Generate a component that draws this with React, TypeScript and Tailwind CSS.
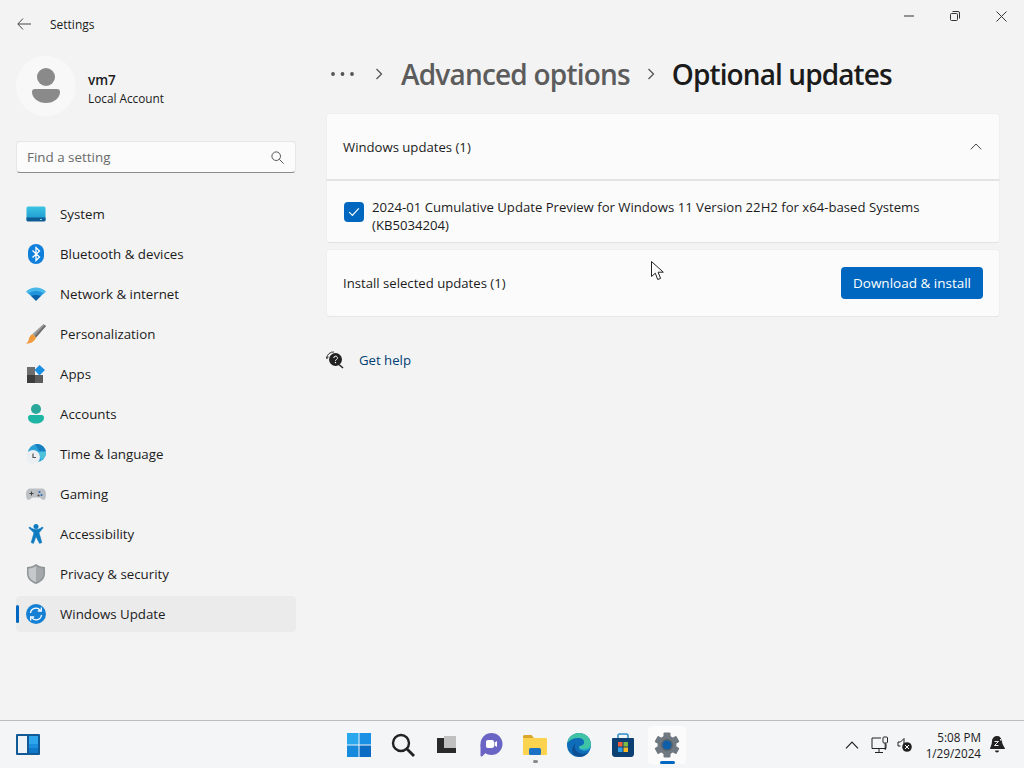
import type { ReactNode } from "react";

const font = { fontFamily: '"Open Sans", "Noto Sans", sans-serif' };

const SystemIcon = () => (
  <svg width="20" height="16" viewBox="0 0 20 16">
    <defs>
      <linearGradient id="sys" x1="0" y1="0" x2="0" y2="1">
        <stop offset="0" stopColor="#3cc4e4" />
        <stop offset="1" stopColor="#1a94cc" />
      </linearGradient>
    </defs>
    <rect x="0.5" y="0.5" width="19" height="14.5" rx="1.5" fill="url(#sys)" />
    <path d="M.5 11.5h19V14a1.5 1.5 0 0 1-1.5 1.5H2A1.5 1.5 0 0 1 .5 14z" fill="#0f5c94" />
    <rect x="14" y="13" width="2" height="1" fill="#8fd0ea" />
  </svg>
);

const BluetoothIcon = () => (
  <svg width="16" height="20" viewBox="0 0 16 20">
    <rect x="0" y="0" width="16" height="20" rx="8" fill="#0f7fdc" />
    <path d="M4.5 6.5l7 6.5-3.5 3.5V3.5L11.5 7l-7 6.5" fill="none" stroke="#fff" strokeWidth="1.3" />
  </svg>
);

const WifiIcon = () => (
  <svg width="20" height="14" viewBox="0 0 20 14">
    <path d="M0 4.5C5.500 -1 14.500 -1 20 4.500l-2.500 2.500H2.500z" fill="#48b8ea" />
    <path d="M2.500 6.500c4-3.500 11-3.500 15 0L15 9H5z" fill="#1f93dc" />
    <path d="M5 9c3-1.500 7-1.500 10 0l-5 5z" fill="#0c5fa8" />
  </svg>
);

const BrushIcon = () => (
  <svg width="20" height="20" viewBox="0 0 20 20">
    <path d="M17.500 0L20 2 10 13.500 6.500 10z" fill="#9a9a9a" />
    <path d="M20 2L10 13.500 8.500 12 18.500 1z" fill="#6e6e6e" />
    <path d="M6.500 10L10 13.500c-1 3.500-5 6.500-10 6 2.500-1.500 2.500-3 3-5 .5-2 2-4 3.500-4.500z" fill="#f09a3c" />
  </svg>
);

const AppsIcon = () => (
  <svg width="18" height="18" viewBox="0 0 18 18">
    <rect x="0" y="2" width="8" height="8" fill="#6e6e6e" />
    <rect x="0" y="10" width="8" height="8" fill="#3d3d3d" />
    <rect x="8" y="10" width="8" height="8" fill="#5c5c5c" />
    <path d="M12.500 0L18 5l-5.500 5.500L7.500 5z" fill="#1a8ee0" />
  </svg>
);

const AccountsIcon = () => (
  <svg width="16" height="20" viewBox="0 0 16 20">
    <circle cx="8" cy="5" r="5" fill="#2aa79b" />
    <path d="M0 13.500C0 12 1 11 2.500 11h11c1.500 0 2.500 1 2.500 2.500C16 17.500 12 19.500 8 19.500S0 17.500 0 13.500z" fill="#1eb5a4" />
  </svg>
);

const TimeIcon = () => (
  <svg width="20" height="20" viewBox="0 0 20 20">
    <circle cx="11" cy="9" r="9" fill="#2aa2d8" />
    <path d="M11 0a9 9 0 0 1 8.800 7H13l-4-7z" fill="#177fc0" />
    <path d="M13 8h7a9 9 0 0 1-5 8z" fill="#4fc3dc" />
    <circle cx="7" cy="13" r="7" fill="#eceff2" />
    <path d="M7 9.500V13.500H10" fill="none" stroke="#555" strokeWidth="1.200" />
  </svg>
);

const GamingIcon = () => (
  <svg width="20" height="13" viewBox="0 0 20 13">
    <path d="M4 0.500h12c2.500 0 4 2.500 4 6 0 3.500-1 5.500-2.500 5.500-2 0-2.500-2.500-4.500-2.500H7c-2 0-2.500 2.500-4.500 2.500C1 12 0 10 0 6.500 0 3 1.500.5 4 .5z" fill="#bcc0c4" />
    <path d="M3.500 5.500h4M5.500 3.500v4" stroke="#444" strokeWidth="1" />
    <circle cx="13.500" cy="4" r="1.100" fill="#2b6cb0" />
    <circle cx="15.500" cy="7" r="1.100" fill="#2b6cb0" />
    <circle cx="12.500" cy="7.500" r="1" fill="#444" />
  </svg>
);

const AccessibilityIcon = () => (
  <svg width="16" height="20" viewBox="0 0 16 20">
    <circle cx="8" cy="2.500" r="2.500" fill="#0f7ac0" />
    <path d="M.8 3.800l1-.8C4 4.800 6 5.500 8 5.500s4-.7 6.200-2.500l1 .8-4.200 5 2.800 9.700-2.200.9L8 12.500l-2.600 6.900-2.200-.9L6 8.800z" fill="#0f7ac0" stroke="#0f7ac0" strokeWidth=".6" />
  </svg>
);

const ShieldIcon = () => (
  <svg width="18" height="20" viewBox="0 0 18 20">
    <path d="M9 0c2.500 2 5.500 3 9 3v6.500c0 5-3.500 8.500-9 10.500-5.500-2-9-5.500-9-10.500V3c3.500 0 6.500-1 9-3z" fill="#8f9497" />
    <path d="M9 2c2 1.500 4.500 2.300 7.500 2.500v5c0 4-2.800 7-7.500 8.800z" fill="#a4a8ab" />
    <path d="M9 2C7 3.500 4.500 4.300 1.500 4.500v5c0 4 2.800 7 7.500 8.800z" fill="#c6c9cb" />
  </svg>
);

const UpdateIcon = () => (
  <svg width="20" height="20" viewBox="0 0 20 20">
    <circle cx="10" cy="10" r="10" fill="#1580d4" />
    <path d="M4.500 9a5.500 5.500 0 0 1 9.800-2.700M15.500 11a5.500 5.500 0 0 1-9.800 2.700" fill="none" stroke="#fff" strokeWidth="1.300" />
    <path d="M15.300 3.500v3.500h-3.500M4.700 16.500V13h3.500" fill="none" stroke="#fff" strokeWidth="1.300" />
  </svg>
);

const nav: { label: string; icon: ReactNode }[] = [
  { label: "System", icon: <SystemIcon /> },
  { label: "Bluetooth & devices", icon: <BluetoothIcon /> },
  { label: "Network & internet", icon: <WifiIcon /> },
  { label: "Personalization", icon: <BrushIcon /> },
  { label: "Apps", icon: <AppsIcon /> },
  { label: "Accounts", icon: <AccountsIcon /> },
  { label: "Time & language", icon: <TimeIcon /> },
  { label: "Gaming", icon: <GamingIcon /> },
  { label: "Accessibility", icon: <AccessibilityIcon /> },
  { label: "Privacy & security", icon: <ShieldIcon /> },
  { label: "Windows Update", icon: <UpdateIcon /> },
];

function TitleBar() {
  return (
    <div className="flex h-12 items-center">
      <svg className="ml-[17px]" width="14" height="12" viewBox="0 0 14 12">
        <path d="M6 .5L.8 6 6 11.500M1 6h13" fill="none" stroke="#444" strokeWidth="1" />
      </svg>
      <span className="mt-[2px] ml-[19px] text-[12px] text-[#1b1b1b]">Settings</span>
      <div className="ml-auto flex">
        <div className="flex h-8 w-[46px] -translate-y-2 items-center justify-center">
          <svg width="10" height="2" viewBox="0 0 10 2">
            <path d="M0 1h10" stroke="#333" strokeWidth="1" />
          </svg>
        </div>
        <div className="flex h-8 w-[46px] -translate-y-2 items-center justify-center">
          <svg width="10" height="10" viewBox="0 0 10 10">
            <rect x="0.500" y="2.500" width="7" height="7" rx="1" fill="none" stroke="#333" />
            <path d="M2.500 .5h5.500a1.500 1.500 0 0 1 1.500 1.500v5.500" fill="none" stroke="#333" />
          </svg>
        </div>
        <div className="flex h-8 w-[46px] -translate-y-2 items-center justify-center">
          <svg width="11" height="11" viewBox="0 0 11 11">
            <path d="M.5.500l10 10M10.500.5l-10 10" stroke="#333" strokeWidth="1" />
          </svg>
        </div>
      </div>
    </div>
  );
}

function Sidebar() {
  return (
    <div className="flex w-[326px] shrink-0 flex-col pl-4">
      <div className="mt-2 flex items-center">
        <div className="flex h-[60px] w-[60px] items-center justify-center rounded-full bg-[#f8f8f8]">
          <svg width="30" height="36" viewBox="0 0 30 36">
            <circle cx="15" cy="9" r="9" fill="#8a8a8a" />
            <path d="M1 24c0-2 1-3 3-3h22c2 0 3 1 3 3 0 6-6 11-14 11S1 30 1 24z" fill="#8a8a8a" />
          </svg>
        </div>
        <div className="mt-[6px] ml-3 flex flex-col">
          <span className="text-[13.500px] leading-[18px] font-semibold text-[#1b1b1b]">vm7</span>
          <span className="text-[11.800px] leading-[18px] text-[#1b1b1b]">Local Account</span>
        </div>
      </div>
      <div className="mt-[25px] flex h-8 w-[280px] items-center justify-between rounded border border-[#e6e6e6] border-b-[#8a8a8a] bg-[#fbfbfb] pr-[11px] pl-[10px]">
        <span className="text-[13.400px] text-[#6a6a6a]">Find a setting</span>
        <svg width="13" height="13" viewBox="0 0 13 13">
          <circle cx="5.200" cy="5.200" r="4.300" fill="none" stroke="#555" />
          <path d="M8.300 8.300l4.200 4.200" stroke="#555" />
        </svg>
      </div>
      <div className="mt-[23px] flex w-[280px] flex-col gap-1">
        {nav.map((item) => {
          const active = item.label === "Windows Update";
          return (
            <div key={item.label} className={`relative flex h-9 items-center rounded ${active ? "bg-[#ebebeb]" : ""}`}>
              {active && <div className="absolute top-[9px] left-0 h-[18px] w-[3px] rounded bg-[#0067c0]" />}
              <div className="ml-[10px] flex w-5 justify-center">{item.icon}</div>
              <span className="ml-[14px] pt-[2px] text-[13.300px] text-[#1b1b1b]">{item.label}</span>
            </div>
          );
        })}
      </div>
    </div>
  );
}

function Main() {
  return (
    <div className="flex w-[674px] flex-col">
      <div className="flex h-[52px] items-center">
        <svg className="ml-[5px]" width="24" height="4" viewBox="0 0 24 4">
          <circle cx="2" cy="2" r="1.900" fill="#555" />
          <circle cx="11.500" cy="2" r="1.900" fill="#555" />
          <circle cx="21" cy="2" r="1.900" fill="#555" />
        </svg>
        <svg className="ml-[20px]" width="8" height="12" viewBox="0 0 8 12">
          <path d="M1.500 1l5 5-5 5" fill="none" stroke="#555" strokeWidth="1.300" />
        </svg>
        <span className="ml-[18px] text-[28px] font-semibold tracking-[-0.8px] whitespace-nowrap text-[#5c5c5c]">Advanced options</span>
        <svg className="ml-[17px]" width="8" height="12" viewBox="0 0 8 12">
          <path d="M1.500 1l5 5-5 5" fill="none" stroke="#555" strokeWidth="1.300" />
        </svg>
        <span className="ml-[17px] text-[28px] font-semibold tracking-[-0.9px] whitespace-nowrap text-[#1b1b1b]">Optional updates</span>
      </div>
      <div className="mt-[13px] flex h-[68px] items-center justify-between rounded-t border border-[#efefef] border-b-2 border-b-[#e4e4e4] bg-[#fbfbfb] pr-[17px] pl-4">
        <span className="pt-[2px] text-[13.150px] text-[#1b1b1b]">Windows updates (1)</span>
        <svg width="12" height="7" viewBox="0 0 12 7">
          <path d="M.8 6.300L6 1l5.200 5.300" fill="none" stroke="#444" strokeWidth="1" />
        </svg>
      </div>
      <div className="flex h-[62px] items-center rounded-b border border-t-0 border-[#efefef] border-b-[#e2e2e2] bg-[#fbfbfb] pl-[17px]">
        <div className="flex h-5 w-5 shrink-0 items-center justify-center rounded bg-[#0067c0]">
          <svg width="12" height="10" viewBox="0 0 12 10">
            <path d="M1.200 5.200l3.200 3.200 6.400-7" fill="none" stroke="#fff" strokeWidth="1.200" />
          </svg>
        </div>
        <span className="mt-[8px] ml-2 w-[590px] text-[13.150px] leading-[18px] text-[#1b1b1b]">
          2024-01 Cumulative Update Preview for Windows 11 Version 22H2 for x64-based Systems (KB5034204)
        </span>
      </div>
      <div className="mt-[6px] flex h-[68px] items-center justify-between rounded border border-[#efefef] border-b-[#e6e6e6] bg-[#fbfbfb] pr-4 pl-4">
        <span className="pt-[2px] text-[13.150px] text-[#1b1b1b]">Install selected updates (1)</span>
        <div className="flex h-8 w-[142px] items-center justify-center rounded bg-[#0067c0] text-[13.500px] text-white">
          Download &amp; install
        </div>
      </div>
      <div className="mt-[33px] flex items-center">
        <svg width="18" height="18" viewBox="0 0 18 18">
          <path d="M.8 7.500A6.500 6.500 0 0 1 8 1" fill="none" stroke="#333" strokeWidth="1" />
          <path d="M.8 7.500l1.800-1.500M.8 7.500L0 5.500" fill="none" stroke="#333" strokeWidth="1" />
          <circle cx="9.500" cy="8.500" r="6.500" fill="#222" />
          <path d="M13 13.500l4 3.500" stroke="#222" strokeWidth="1.500" />
          <path d="M7.800 7a1.800 1.800 0 1 1 2.700 1.500c-.7.4-1 .7-1 1.300" fill="none" stroke="#fff" strokeWidth="1" />
          <circle cx="9.500" cy="11.500" r=".7" fill="#fff" />
        </svg>
        <span className="ml-[15px] pt-[1px] text-[13.200px] text-[#003e73]">Get help</span>
      </div>
    </div>
  );
}

function Taskbar() {
  const teeth = [0, 60, 120, 180, 240, 300];
  return (
    <div className="relative flex h-12 items-center border-t border-[#bdbdbd] bg-[#f4f5f6]">
      <svg className="ml-4" width="24" height="21" viewBox="0 0 24 21">
        <rect width="24" height="21" rx="1" fill="#125a96" />
        <rect x="2" y="2" width="9" height="17" fill="#eef3f7" />
        <rect x="13" y="2" width="9" height="17" fill="#2ea6ee" />
        <rect x="13" y="10" width="9" height="4" fill="#1a8fe0" />
        <rect x="13" y="14" width="9" height="5" fill="#0f78c8" />
      </svg>
      <div className="ml-[297px] flex items-center">
        <div className="flex w-11 justify-center">
          <svg width="24" height="24" viewBox="0 0 24 24">
            <rect x="0" y="0" width="11.500" height="11.500" fill="#29a8ee" />
            <rect x="12.500" y="0" width="11.500" height="11.500" fill="#1a90e4" />
            <rect x="0" y="12.500" width="11.500" height="11.500" fill="#168adc" />
            <rect x="12.500" y="12.500" width="11.500" height="11.500" fill="#0c6cc4" />
          </svg>
        </div>
        <div className="flex w-11 justify-center">
          <svg width="24" height="24" viewBox="0 0 24 24">
            <circle cx="10" cy="10" r="8" fill="none" stroke="#222" strokeWidth="2.400" />
            <path d="M16 16l7 7" stroke="#222" strokeWidth="2.800" />
          </svg>
        </div>
        <div className="flex w-11 justify-center">
          <svg width="20" height="17" viewBox="0 0 20 17">
            <rect x="7" y="0" width="12" height="12" fill="#c0c0c0" />
            <path d="M0 2h7v10h12v5H0z" fill="#2a2a2a" />
          </svg>
        </div>
        <div className="flex w-11 justify-center">
          <svg width="24" height="24" viewBox="0 0 24 24">
            <circle cx="12.500" cy="11" r="11" fill="#6a64c4" />
            <path d="M1.500 11v11c0 1.500 1 2 2 1l3-3z" fill="#6a64c4" />
            <rect x="7" y="7" width="8" height="8" rx="1.800" fill="#fff" />
            <path d="M15.500 9.500l2.500-1.500v6l-2.500-1.500z" fill="#fff" />
          </svg>
        </div>
        <div className="relative flex w-11 justify-center">
          <svg width="24" height="20" viewBox="0 0 24 20">
            <path d="M0 1.500C0 .7.700 0 1.500 0h7l2.500 3H0z" fill="#d9a62e" />
            <rect y="3" width="24" height="17" rx="1" fill="#fbd34e" />
            <rect x="6" y="13" width="12" height="7" rx="1.500" fill="#1b72c4" />
          </svg>
          <div className="absolute top-[25px] h-[3px] w-[5px] rounded-full bg-[#8a8a8a]" />
        </div>
        <div className="flex w-11 justify-center">
          <svg width="24" height="24" viewBox="0 0 24 24">
            <circle cx="12" cy="12" r="12" fill="#0f6cb8" />
            <path d="M.3 10C1.500 4 6.500 0 12 0c7 0 12 5 12 12 0 3.500-3 5.500-6.500 5.500-3 0-5.500-1.500-5.500-3.500 0-1.500 5-1 5-4.500C17.500 7 15 5 11 5 6 5 2.500 7 .3 10z" fill="#3ec4a4" />
            <path d="M24 12c0 3.500-3 5.500-6.500 5.500-2.500 0-4.500-1-5.500-2.500 2 1 5.500 1.500 8.500.5 1.500-.5 3-2 3.500-3.500z" fill="#1f9fd8" />
            <path d="M7 22c5 3 11 2 15-3-3 2.500-8 2.500-11.500 0C7.500 16.500 7 13 9 10 5 13 4 19 7 22z" fill="#0c4f92" />
          </svg>
        </div>
        <div className="flex w-11 justify-center">
          <svg width="22" height="24" viewBox="0 0 22 24">
            <path d="M6 5V2.500C6 1.500 7 1 8 1h6c1 0 2 .5 2 1.500V5" fill="none" stroke="#2a8fc8" strokeWidth="1.500" />
            <path d="M1 5h20a1 1 0 0 1 1 1v15c0 1.500-1 3-3 3H3c-2 0-3-1.500-3-3V6a1 1 0 0 1 1-1z" fill="#0c3f72" />
            <rect x="6" y="9" width="4.500" height="4.500" fill="#ef5c3c" />
            <rect x="11.500" y="9" width="4.500" height="4.500" fill="#7fbb42" />
            <rect x="6" y="14.500" width="4.500" height="4.500" fill="#2f9ee8" />
            <rect x="11.500" y="14.500" width="4.500" height="4.500" fill="#fcb820" />
          </svg>
        </div>
        <div className="relative mx-[3px] flex h-[38px] w-[38px] items-center justify-center rounded bg-[#fbfbfb]">
          <svg width="26" height="26" viewBox="0 0 26 26">
            {teeth.map((deg) => (
              <rect key={deg} x="9.500" y="0.500" width="7" height="6" rx="1" fill="#6f7880" transform={`rotate(${deg} 13 13)`} />
            ))}
            <circle cx="13" cy="13" r="9.500" fill="#6f7880" />
            <circle cx="13" cy="13" r="6" fill="#5a646c" />
            <circle cx="13" cy="13" r="4.500" fill="#0f5ea8" />
          </svg>
          <div className="absolute bottom-0 h-[3px] w-[15px] rounded bg-[#0067c0]" />
        </div>
      </div>
      <div className="ml-auto flex items-center">
        <svg width="14" height="8" viewBox="0 0 14 8">
          <path d="M1 7.300L7 1l6 6.300" fill="none" stroke="#222" strokeWidth="1.200" />
        </svg>
        <svg className="ml-[12px]" width="18" height="17" viewBox="0 0 18 17">
          <path d="M10 2H1v10.500h14V8M8 12.500v3.500M4 16.500h8" fill="none" stroke="#222" />
          <rect x="12" y="1" width="4.500" height="6" rx="1" fill="none" stroke="#222" />
          <path d="M14.200 7v7" stroke="#222" />
        </svg>
        <svg className="ml-[8px]" width="15" height="15" viewBox="0 0 15 15">
          <path d="M1 5h2.500L7 1.500V7M1 5v4h2.500" fill="none" stroke="#222" />
          <circle cx="10" cy="10" r="4.800" fill="#222" />
          <path d="M8 8l4 4M12 8l-4 4" stroke="#fff" />
        </svg>
        <div className="ml-[11px] flex w-[58px] flex-col items-end text-[11.700px] leading-[16px] text-[#1b1b1b]">
          <span>5:08 PM</span>
          <span>1/29/2024</span>
        </div>
        <svg className="mr-[19px] ml-[9px]" width="15" height="17" viewBox="0 0 15 17">
          <path d="M7 0a5 5 0 0 1 5 5c0 4 3 6 3 8H0c0-2 2-4 2-8a5 5 0 0 1 5-5z" fill="#222" />
          <path d="M5 14.500h4a2 2 0 0 1-4 0z" fill="#222" />
          <path d="M4.500 5.500h4l-4 4h4M10 1h3l-3 3h3" fill="none" stroke="#fff" strokeWidth=".9" />
        </svg>
      </div>
    </div>
  );
}

export default function App() {
  return (
    <div className="relative flex h-[768px] w-[1024px] flex-col overflow-hidden bg-[#f3f3f3]" style={font}>
      <TitleBar />
      <div className="flex flex-1">
        <Sidebar />
        <Main />
      </div>
      <Taskbar />
      <svg className="absolute top-[261px] left-[651px]" width="13" height="20" viewBox="0 0 13 20">
        <path d="M.5.500v15l3.800-3.300 2.400 6.300 2.900-1.100-2.500-6.200h5.200z" fill="#fff" stroke="#222" strokeWidth="1" />
      </svg>
    </div>
  );
}
